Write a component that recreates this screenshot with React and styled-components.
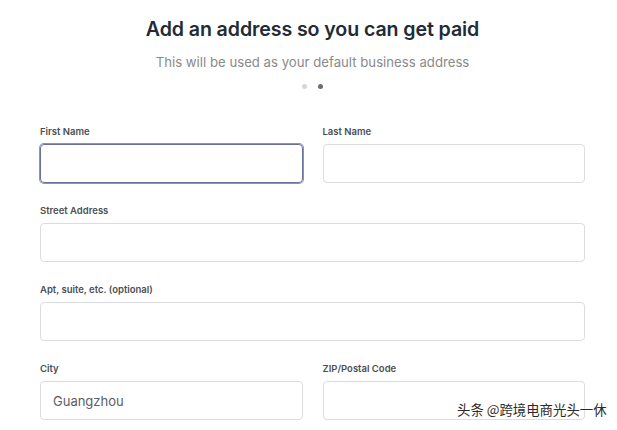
import styled, { createGlobalStyle } from "styled-components";

const GlobalStyle = createGlobalStyle`
    body {
        margin: 0;
        background: #ffffff;
        font-family: Inter, "Noto Sans", sans-serif;
    }
`;

const fields = [
    [{ label: "First Name", focused: true }, { label: "Last Name" }],
    [{ label: "Street Address" }],
    [{ label: "Apt, suite, etc. (optional)" }],
    [{ label: "City", value: "Guangzhou" }, { label: "ZIP/Postal Code" }],
];

const App = () => {
    return (
        <>
            <GlobalStyle />
            <Page>
                <Header>
                    <Title>Add an address so you can get paid</Title>
                    <Subtitle>This will be used as your default business address</Subtitle>
                    <Dots>
                        <Dot />
                        <Dot active />
                    </Dots>
                </Header>
                <Form>
                    {fields.map((row, i) => (
                        <Row key={i} cols={row.length}>
                            {row.map((f) => (
                                <Field key={f.label}>
                                    <Label>{f.label}</Label>
                                    <Input focused={f.focused}>{f.value}</Input>
                                </Field>
                            ))}
                        </Row>
                    ))}
                </Form>
                <Watermark>头条 @跨境电商光头一休</Watermark>
            </Page>
        </>
    );
};

const Page = styled.div`
    position: relative;
    width: 617px;
    height: 430px;
    overflow: hidden;
`;

const Header = styled.div`
    display: flex;
    flex-direction: column;
    align-items: center;
    padding: 15px 32px 0 40px;
`;

const Title = styled.h1`
    margin: 0;
    font-size: 19.6px;
    line-height: 28px;
    font-weight: 600;
    color: #212b36;
    letter-spacing: -0.1px;
`;

const Subtitle = styled.p`
    margin: 9px 0 0;
    font-size: 13.2px;
    line-height: 20px;
    color: #8a8a8a;
`;

const Dots = styled.div`
    display: flex;
    gap: 11px;
    margin-top: 12px;
`;

const Dot = styled.span`
    width: 5px;
    height: 5px;
    border-radius: 50%;
    background: ${(p) => (p.active ? "#6b6f73" : "#d4d6d8")};
`;

const Form = styled.div`
    display: flex;
    flex-direction: column;
    gap: 22px;
    padding: 37px 32px 0 40px;
`;

const Row = styled.div`
    display: grid;
    grid-template-columns: ${(p) => (p.cols === 2 ? "1fr 1fr" : "1fr")};
    column-gap: 20px;
`;

const Field = styled.div`
    display: flex;
    flex-direction: column;
`;

const Label = styled.div`
    font-size: 9.5px;
    line-height: 12px;
    font-weight: 600;
    color: #4b4f54;
    margin-bottom: 6px;
`;

const Input = styled.div`
    box-sizing: border-box;
    height: 39px;
    display: flex;
    align-items: center;
    padding: 0 12px;
    border: 1px solid ${(p) => (p.focused ? "#6a719a" : "#dcdde0")};
    box-shadow: ${(p) => (p.focused ? "0 0 0 1px #8e93b5" : "none")};
    border-radius: 4px;
    font-size: 13px;
    color: #5a5d61;
`;

const Watermark = styled.div`
    position: absolute;
    left: 457px;
    top: 399px;
    white-space: nowrap;
    font-family: "Noto Sans CJK SC", sans-serif;
    font-size: 13.4px;
    line-height: 20px;
    color: #2a2a2a;
    text-shadow: 0 0 2px #ffffff, 0 0 2px #ffffff;
`;

export default App;
